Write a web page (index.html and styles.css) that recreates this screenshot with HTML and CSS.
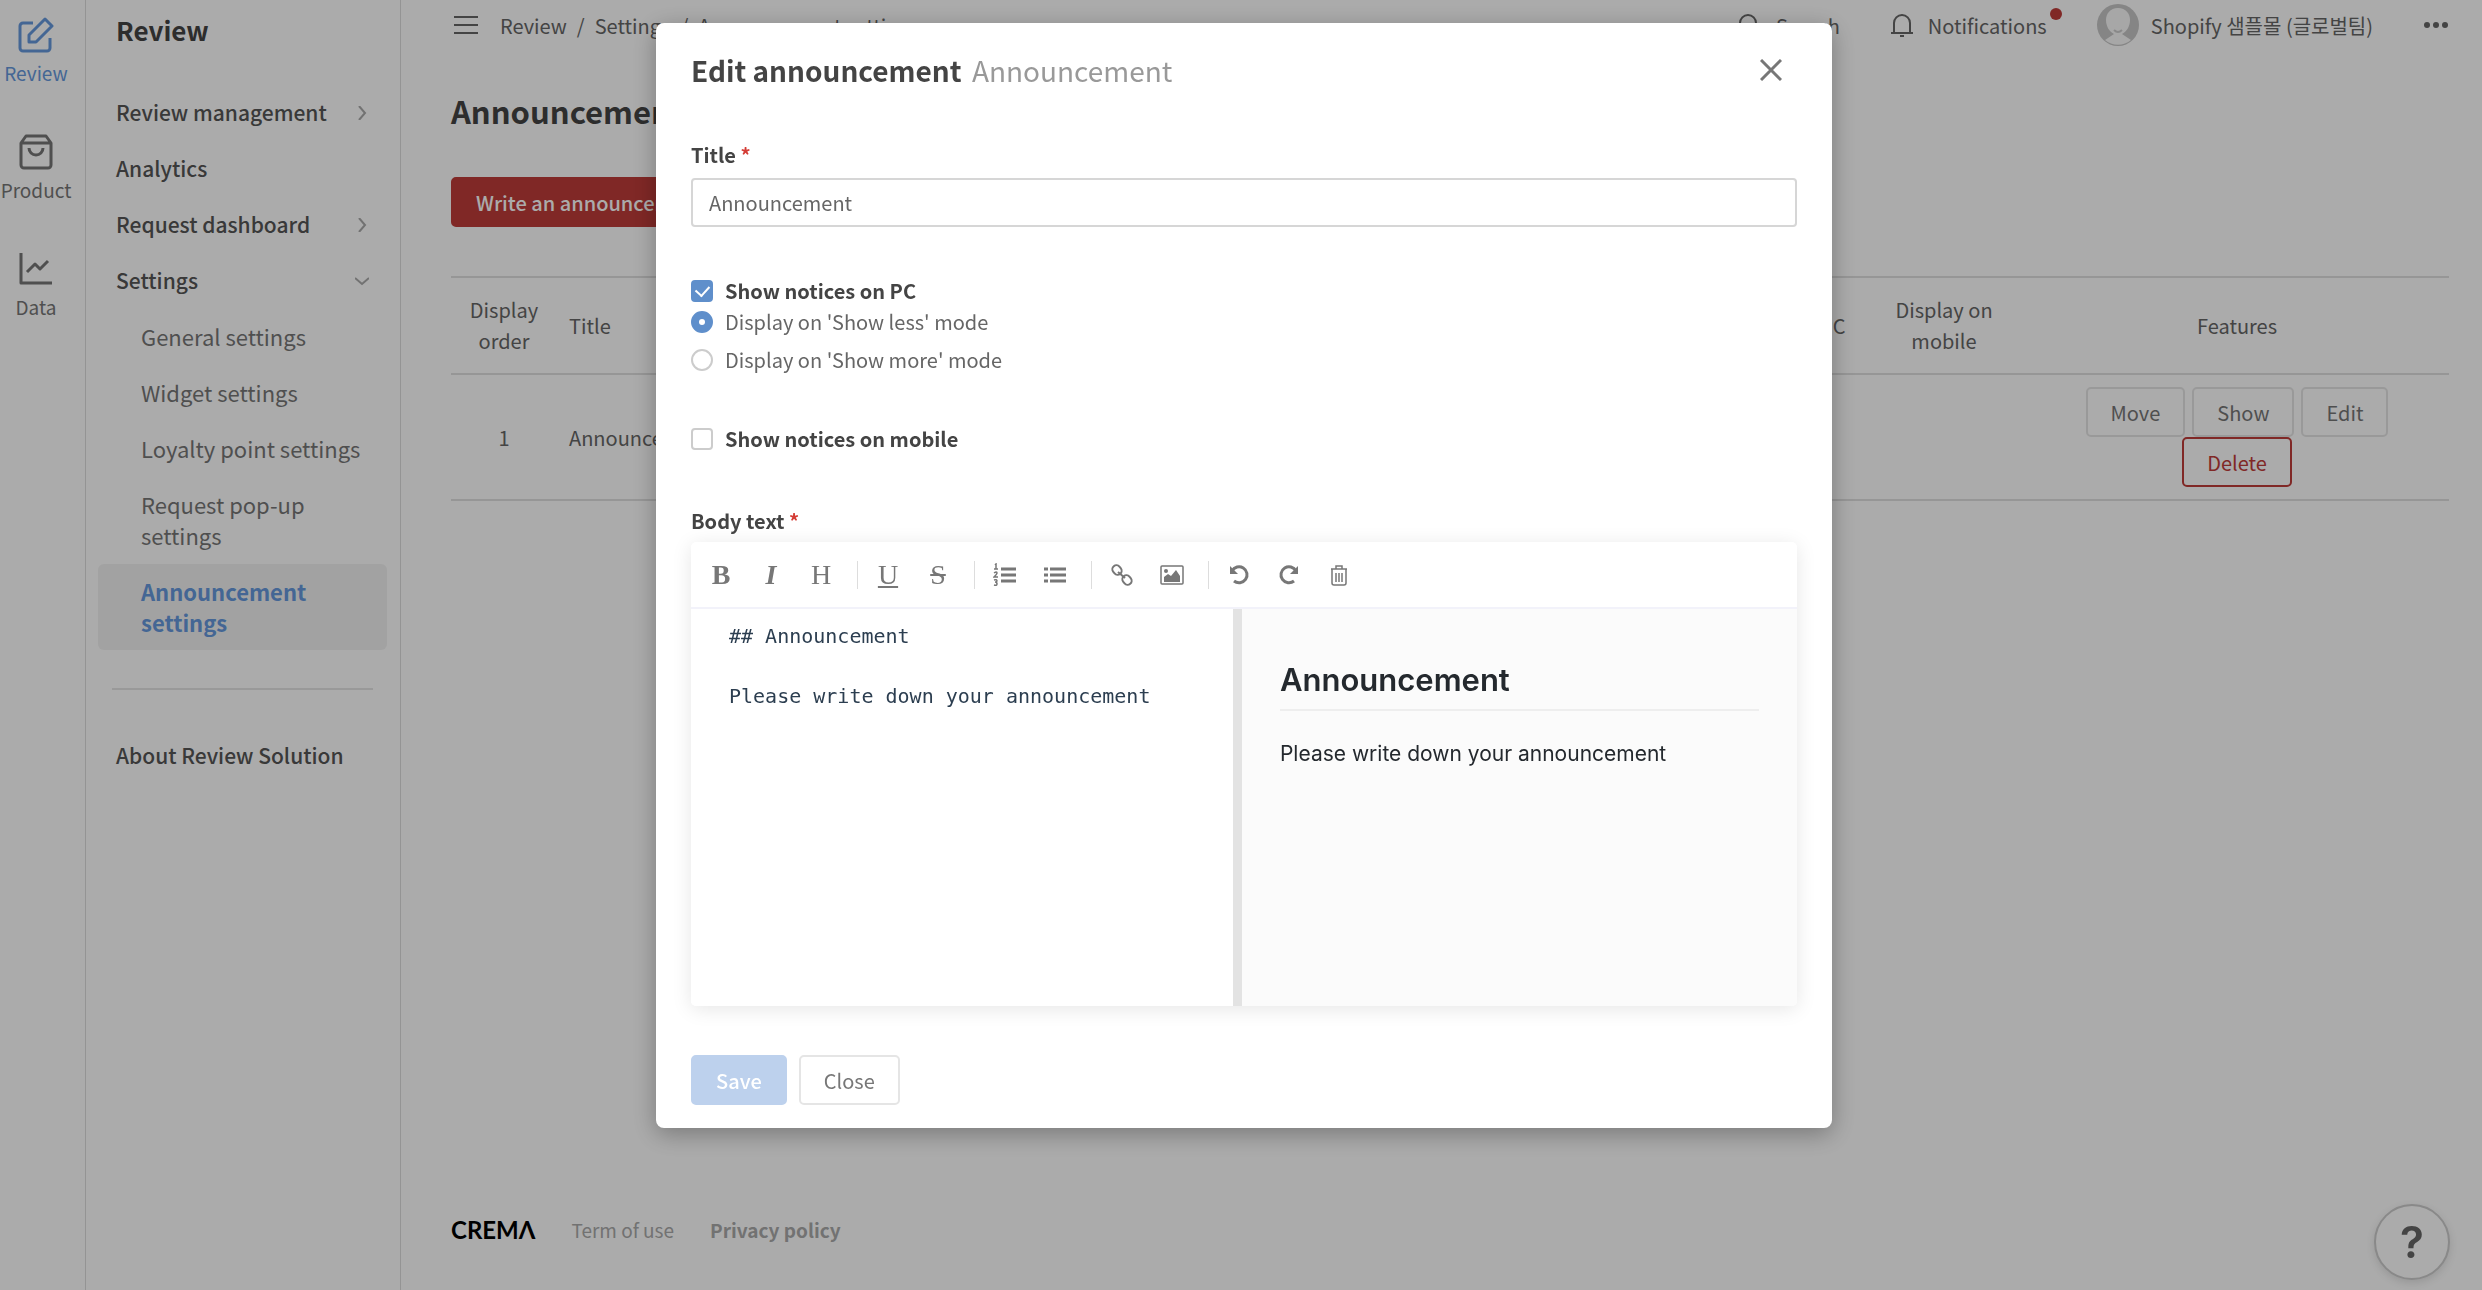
FILE: index.html
```html
<!DOCTYPE html>
<html lang="en">
<head>
    <meta charset="UTF-8">
    <meta name="viewport" content="width=device-width, initial-scale=1.0">
    <title>Announcement settings</title>
    <link rel="stylesheet" href="styles.css">
</head>

<body>
    <div class="app">
        <nav class="rail" aria-label="Solutions">
            <a href="#" class="rail-item active">
                <svg viewBox="0 0 36 36" width="36" height="36"><path d="M15 6H5a3 3 0 0 0-3 3v22a3 3 0 0 0 3 3h24a3 3 0 0 0 3-3V21M11 25v-7L27 2l7 7-16 16z"/></svg>
                Review
            </a>
            <a href="#" class="rail-item">
                <svg viewBox="0 0 36 36" width="36" height="36"><path d="M3 9l5-7h20l5 7v22a3 3 0 0 1-3 3H6a3 3 0 0 1-3-3zM3 9h30M11 14a7 7 0 0 0 14 0"/></svg>
                Product
            </a>
            <a href="#" class="rail-item">
                <svg viewBox="0 0 36 36" width="36" height="36"><path d="M3 2v30h31M9 21l8-8 5 5 8-8"/></svg>
                Data
            </a>
        </nav>

        <aside class="sidebar">
            <h2>Review</h2>
            <ul class="menu">
                <li><a href="#">Review management <svg viewBox="0 0 14 14" width="14" height="14"><path d="M4 0l6 7-6 7"/></svg></a></li>
                <li><a href="#">Analytics</a></li>
                <li><a href="#">Request dashboard <svg viewBox="0 0 14 14" width="14" height="14"><path d="M4 0l6 7-6 7"/></svg></a></li>
                <li>
                    <a href="#">Settings <svg viewBox="0 0 14 14" width="14" height="14"><path d="M0 4l7 6 7-6"/></svg></a>
                    <ul class="submenu">
                        <li><a href="#">General settings</a></li>
                        <li><a href="#">Widget settings</a></li>
                        <li><a href="#">Loyalty point settings</a></li>
                        <li><a href="#">Request pop-up settings</a></li>
                        <li><a href="#" class="active">Announcement settings</a></li>
                    </ul>
                </li>
            </ul>
            <hr>
            <ul class="menu">
                <li><a href="#">About Review Solution</a></li>
            </ul>
        </aside>

        <main class="main">
            <header class="topbar">
                <button type="button" class="icon-btn" aria-label="Toggle menu">
                    <svg viewBox="0 0 24 20" width="24" height="20"><path d="M0 2h24M0 10h24M0 18h24"/></svg>
                </button>
                <div class="breadcrumb">
                    <a href="#">Review</a><span>/</span><a href="#">Settings</a><span>/</span><a href="#">Announcement settings</a>
                </div>
                <a href="#" class="top-link search">
                    <svg viewBox="0 0 24 24" width="24" height="24"><circle cx="10" cy="10" r="8"/><path d="M16 16l7 7"/></svg>
                    Search
                </a>
                <a href="#" class="top-link notifications">
                    <svg viewBox="0 0 24 24" width="24" height="24"><path d="M1 20h22M4 20V10a8 8 0 0 1 16 0v10M10 23h4"/></svg>
                    Notifications
                    <span class="dot"></span>
                </a>
                <a href="#" class="top-link account">
                    <svg class="avatar" viewBox="0 0 42 42" width="42" height="42">
                        <circle cx="21" cy="21" r="21" fill="#c6c6c6"/>
                        <path d="M21 4c8 0 12 6 12 12 0 7-4 12-8 14l9 6a20 20 0 0 1-26 0l9-6c-4-2-8-7-8-14C9 10 13 4 21 4z" fill="#fafafa"/>
                        <path d="M17 26q4 4 8 0" fill="none" stroke="#ccc"/>
                    </svg>
                    Shopify 샘플몰 (글로벌팀)
                </a>
                <button type="button" class="icon-btn more" aria-label="More">
                    <svg viewBox="0 0 26 8" width="26" height="8"><circle cx="4" cy="4" r="3"/><circle cx="13" cy="4" r="3"/><circle cx="22" cy="4" r="3"/></svg>
                </button>
            </header>

            <h1>Announcement settings</h1>
            <button type="button" class="btn btn-red">Write an announcement</button>

            <table class="list">
                <thead>
                    <tr>
                        <th class="col-order">Display order</th>
                        <th class="col-title">Title</th>
                        <th class="col-show">Display on PC</th>
                        <th class="col-show">Display on mobile</th>
                        <th class="col-features">Features</th>
                    </tr>
                </thead>
                <tbody>
                    <tr>
                        <td>1</td>
                        <td class="col-title">Announcement</td>
                        <td></td>
                        <td></td>
                        <td>
                            <div class="features">
                                <button type="button" class="btn">Move</button>
                                <button type="button" class="btn">Show</button>
                                <button type="button" class="btn">Edit</button>
                                <button type="button" class="btn btn-delete">Delete</button>
                            </div>
                        </td>
                    </tr>
                </tbody>
            </table>

            <footer class="footer">
                <a href="#" class="logo" aria-label="CREMA">CREMΛ</a>
                <a href="#">Term of use</a>
                <a href="#" class="bold">Privacy policy</a>
            </footer>
        </main>
    </div>

    <button type="button" class="help" aria-label="Help">?</button>

    <div class="overlay">
        <form class="modal" role="dialog" aria-labelledby="modal-title">
            <div class="modal-header">
                <h2 id="modal-title">Edit announcement <small>Announcement</small></h2>
                <button type="button" class="icon-btn close" aria-label="Close dialog">
                    <svg viewBox="0 0 22 22" width="22" height="22"><path d="M1 1l20 20M21 1L1 21"/></svg>
                </button>
            </div>

            <label class="label" for="title">Title <em>*</em></label>
            <input type="text" id="title" class="text-input" value="Announcement">

            <div class="group">
                <label class="option strong"><input type="checkbox" checked> Show notices on PC</label>
                <label class="option"><input type="radio" name="pc-mode" checked> Display on 'Show less' mode</label>
                <label class="option spaced"><input type="radio" name="pc-mode"> Display on 'Show more' mode</label>
            </div>
            <div class="group">
                <label class="option strong"><input type="checkbox"> Show notices on mobile</label>
            </div>

            <label class="label body-label" for="body">Body text <em>*</em></label>
            <div class="editor">
                <div class="toolbar">
                    <button type="button" class="letter b" aria-label="Bold">B</button>
                    <button type="button" class="letter i" aria-label="Italic">I</button>
                    <button type="button" class="letter" aria-label="Heading">H</button>
                    <span class="sep"></span>
                    <button type="button" class="letter u" aria-label="Underline">U</button>
                    <button type="button" class="letter s" aria-label="Strikethrough">S</button>
                    <span class="sep"></span>
                    <button type="button" aria-label="Ordered list">
                        <svg viewBox="0 0 24 24" width="24" height="24"><path class="thick" d="M8 6h15M8 12h15M8 18h15"/><path class="thin" d="M2 2l1-1v5M1 6h4M1 10q3-2 3 0 0 1-3 4h4M1 17q3-1 3 1 0 1-2 1 2 0 2 2 0 2-3 1"/></svg>
                    </button>
                    <button type="button" aria-label="Unordered list">
                        <svg viewBox="0 0 24 24" width="24" height="24"><path class="thick" d="M7 6h16M7 12h16M7 18h16M1 6h4M1 12h4M1 18h4"/></svg>
                    </button>
                    <span class="sep"></span>
                    <button type="button" aria-label="Link">
                        <svg viewBox="0 0 24 24" width="24" height="24"><rect x="3" y="2" width="8" height="10" rx="4" transform="rotate(-40 7 7)"/><rect x="13" y="12" width="8" height="10" rx="4" transform="rotate(-40 17 17)"/><path d="M8 9l7 6"/></svg>
                    </button>
                    <button type="button" aria-label="Image">
                        <svg viewBox="0 0 24 24" width="24" height="24"><rect class="thin" x="1" y="3" width="22" height="18" rx="1"/><path class="solid" d="M4 19v-5l4-3 3 2 5-6 4 6v6z"/><circle class="solid" cx="6" cy="8" r="2"/></svg>
                    </button>
                    <span class="sep"></span>
                    <button type="button" aria-label="Undo">
                        <svg viewBox="0 0 24 24" width="24" height="24"><path class="thick" d="M5 8a8 8 0 1 1 2 10"/><path class="solid" d="M3 3v8h8z"/></svg>
                    </button>
                    <button type="button" aria-label="Redo">
                        <svg viewBox="0 0 24 24" width="24" height="24"><path class="thick" d="M19 8a8 8 0 1 0-2 10"/><path class="solid" d="M21 3v8h-8z"/></svg>
                    </button>
                    <button type="button" aria-label="Clear">
                        <svg viewBox="0 0 24 24" width="24" height="24"><path class="thin" d="M4 6h16M9 6V3h6v3M5 6v14q0 2 2 2h10q2 0 2-2V6M9 10v9M12 10v9M15 10v9"/></svg>
                    </button>
                </div>
                <div class="panes">
                    <textarea id="body" spellcheck="false">## Announcement

Please write down your announcement</textarea>
                    <div class="preview">
                        <h2>Announcement</h2>
                        <p>Please write down your announcement</p>
                    </div>
                </div>
            </div>

            <div class="actions">
                <button type="submit" class="btn btn-save" disabled>Save</button>
                <button type="button" class="btn">Close</button>
            </div>
        </form>
    </div>
</body>
</html>
```
FILE: styles.css
```css
* {
    box-sizing: border-box;
}
body {
    margin: 0;
    font-family: "Noto Sans CJK KR", sans-serif;
    font-size: 20px;
    line-height: 31px;
    color: #666;
    background: #fff;
}
a {
    color: inherit;
    text-decoration: none;
}
button, input, textarea {
    font: inherit;
    color: inherit;
}
svg {
    fill: none;
    stroke: currentColor;
    stroke-width: 2;
    flex: none;
}
h1, h2, p, ul {
    margin: 0;
    padding: 0;
}
ul {
    list-style: none;
}
.app {
    display: flex;
    min-height: 100vh;
}

/* left rail */
.rail {
    width: 86px;
    flex: none;
    border-right: 1px solid #ddd;
    padding: 17px 13px 0 0;
}
.rail-item {
    display: flex;
    flex-direction: column;
    align-items: center;
    gap: 4px;
    margin-bottom: 46px;
    font-size: 19px;
    color: #777;
}
.rail-item svg {
    stroke-width: 3;
    stroke-linejoin: round;
}
.rail-item.active {
    color: #6699dd;
}

/* sidebar */
.sidebar {
    width: 315px;
    flex: none;
    border-right: 1px solid #ddd;
    padding: 14px 13px 14px 12px;
}
.sidebar h2 {
    font-size: 26px;
    color: #444;
    margin: 0 18px 40px;
}
.menu a {
    display: flex;
    justify-content: space-between;
    align-items: center;
    padding: 12px 18px;
    border-radius: 6px;
    font-size: 21px;
    font-weight: 500;
    color: #555;
}
.menu > li > a {
    margin-bottom: 1px;
}
.menu svg {
    color: #aaa;
}
.menu .submenu a {
    padding-left: 43px;
    font-size: 22px;
    font-weight: 400;
    color: #777;
}
.menu .submenu li + li {
    margin-top: 1px;
}
.menu .submenu a.active {
    background: #f2f2f2;
    color: #6699dd;
    font-weight: 700;
}
.sidebar hr {
    margin: 38px 14px;
    border: 0;
    border-top: 2px solid #e5e5e5;
}

/* main */
.main {
    flex: 1;
    display: flex;
    flex-direction: column;
    align-items: flex-start;
    padding: 0 33px 45px 50px;
}
.topbar {
    width: 100%;
    height: 50px;
    display: flex;
    align-items: center;
}
.icon-btn {
    display: flex;
    padding: 0;
    border: 0;
    background: none;
    cursor: pointer;
}
.topbar .icon-btn {
    margin-left: 3px;
    stroke-width: 3;
}
.breadcrumb {
    flex: 1;
    margin-left: 22px;
}
.breadcrumb span {
    margin: 0 10px;
}
.top-link {
    display: flex;
    align-items: center;
    gap: 14px;
    margin-left: 50px;
}
.top-link .dot {
    width: 12px;
    height: 12px;
    margin: 0 0 22px -11px;
    border-radius: 50%;
    background: #bf3c39;
}
.top-link.account {
    gap: 12px;
    margin-left: 35px;
}
.avatar {
    stroke: none;
}
.topbar .more {
    margin-left: 50px;
}
.more svg {
    fill: currentColor;
    stroke: none;
}
h1 {
    margin-top: 38px;
    font-size: 31px;
    line-height: 46px;
    color: #444;
}
.btn {
    height: 50px;
    padding: 0 23px;
    border: 2px solid #e5e5e5;
    border-radius: 5px;
    background: #fff;
    color: #777;
    cursor: pointer;
}
.btn-red {
    margin-top: 43px;
    border-color: #bf3c39;
    background: #bf3c39;
    color: #fff;
    font-weight: 500;
}
.list {
    width: 100%;
    margin-top: 49px;
    border-collapse: collapse;
    table-layout: fixed;
    text-align: center;
}
.list tr {
    border-top: 2px solid #e0e0e0;
    border-bottom: 2px solid #e0e0e0;
}
.list th {
    padding: 16px 12px 17px;
    font-weight: 400;
}
.list td {
    padding: 12px;
}
.list .col-title {
    text-align: left;
}
.col-order {
    width: 106px;
}
.col-show {
    width: 162px;
}
.col-features {
    width: 424px;
}
.features {
    display: flex;
    flex-wrap: wrap;
    justify-content: center;
    column-gap: 7px;
    padding: 0 40px;
}
.btn-delete {
    border-color: #bf3c39;
    color: #bf3c39;
}
.footer {
    display: flex;
    gap: 36px;
    margin-top: auto;
    font-size: 19px;
    color: #aaa;
}
.footer .bold {
    font-weight: 700;
}
.footer .logo {
    font-family: Lato, sans-serif;
    font-size: 24px;
    font-weight: 700;
    color: #000;
}
.help {
    position: fixed;
    right: 32px;
    bottom: 10px;
    width: 76px;
    height: 76px;
    padding: 0;
    border: 2px solid #ccc;
    border-radius: 50%;
    background: #fff;
    box-shadow: 0 3px 8px rgba(0, 0, 0, .12);
    font-family: Inter, sans-serif;
    font-size: 44px;
    font-weight: 600;
}

/* dialog */
.overlay {
    position: fixed;
    inset: 0;
    display: flex;
    justify-content: center;
    align-items: flex-start;
    padding: 23px 0 0 6px;
    overflow: auto;
    background: rgba(0, 0, 0, .33);
}
.modal {
    width: 1176px;
    max-width: 100%;
    padding: 25px 35px 23px;
    border-radius: 8px;
    background: #fff;
    box-shadow: 0 6px 24px rgba(0, 0, 0, .3);
}
.modal-header {
    display: flex;
    justify-content: space-between;
    align-items: center;
    margin-bottom: 47px;
}
.modal-header h2 {
    font-size: 28px;
    line-height: 44px;
    color: #444;
}
.modal-header small {
    margin-left: 4px;
    font-size: 28px;
    font-weight: 400;
    color: #999;
}
.close {
    margin-right: 15px;
    color: #777;
}
.close svg {
    stroke-width: 3;
}
.label {
    display: block;
    font-weight: 700;
    color: #444;
}
.label em {
    font-style: normal;
    color: #d43c35;
}
.text-input {
    display: block;
    width: 100%;
    height: 49px;
    margin-top: 8px;
    padding: 0 16px;
    border: 2px solid #d6d6d6;
    border-radius: 4px;
}
.group {
    margin-top: 48px;
}
.option {
    display: flex;
    align-items: center;
    gap: 12px;
}
.option.strong {
    font-weight: 700;
    color: #444;
}
.option.spaced {
    margin-top: 7px;
}
.option input {
    appearance: none;
    width: 22px;
    height: 22px;
    margin: 0;
    border: 2px solid #ccc;
    border-radius: 4px;
    background: #fff;
}
.option input[type="radio"] {
    border-radius: 50%;
}
.option input:checked {
    display: grid;
    place-items: center;
    border-color: #5f8fcb;
    background: #5f8fcb;
}
.option input[type="radio"]:checked::after {
    content: "";
    width: 6px;
    height: 6px;
    border-radius: 50%;
    background: #fff;
}
.option input[type="checkbox"]:checked::after {
    content: "";
    width: 7px;
    height: 11px;
    margin-bottom: 3px;
    border: solid #fff;
    border-width: 0 2px 2px 0;
    transform: rotate(42deg);
}
.body-label {
    margin-top: 51px;
}
.editor {
    margin-top: 6px;
    border-radius: 5px;
    background: #fff;
    box-shadow: 0 3px 20px rgba(0, 0, 0, .1);
}
.toolbar {
    display: flex;
    align-items: center;
    height: 67px;
    padding: 0 5px;
    border-bottom: 2px solid #f2f2fa;
}
.toolbar button {
    display: flex;
    justify-content: center;
    align-items: center;
    width: 50px;
    height: 40px;
    padding: 0;
    border: 0;
    background: none;
    color: #777;
    cursor: pointer;
}
.toolbar .letter {
    font-family: "Liberation Serif", serif;
    font-size: 28px;
}
.toolbar .b {
    font-weight: 700;
}
.toolbar .i {
    font-style: italic;
    font-weight: 700;
}
.toolbar .u {
    text-decoration: underline;
}
.toolbar .s {
    text-decoration: line-through;
}
.sep {
    width: 1px;
    height: 28px;
    margin: 0 5px 0 11px;
    background: #ddd;
}
.toolbar .thick {
    stroke-width: 3;
}
.toolbar .thin {
    stroke-width: 1.5;
}
.toolbar .solid {
    fill: currentColor;
    stroke: none;
}
.panes {
    display: flex;
    height: 397px;
}
.panes textarea {
    width: 49%;
    padding: 12px 38px;
    border: 0;
    border-radius: 0 0 0 5px;
    resize: none;
    outline: none;
    font-family: "DejaVu Sans Mono", monospace;
    font-size: 20px;
    line-height: 30px;
    color: #2c3e50;
}
.preview {
    flex: 1;
    padding: 48px 38px;
    border-left: 9px solid #e3e3e3;
    border-radius: 0 0 5px 0;
    background: #fbfbfb;
    font-family: Inter, sans-serif;
    font-size: 21px;
    color: #24292e;
}
.preview h2 {
    margin-bottom: 27px;
    padding-bottom: 6px;
    border-bottom: 2px solid #eee;
    font-size: 31px;
    font-weight: 600;
    line-height: 46px;
}
.actions {
    display: flex;
    gap: 12px;
    margin-top: 49px;
}
.btn-save {
    border-color: #bdd1ed;
    background: #bdd1ed;
    color: #fff;
    font-weight: 500;
}
```
